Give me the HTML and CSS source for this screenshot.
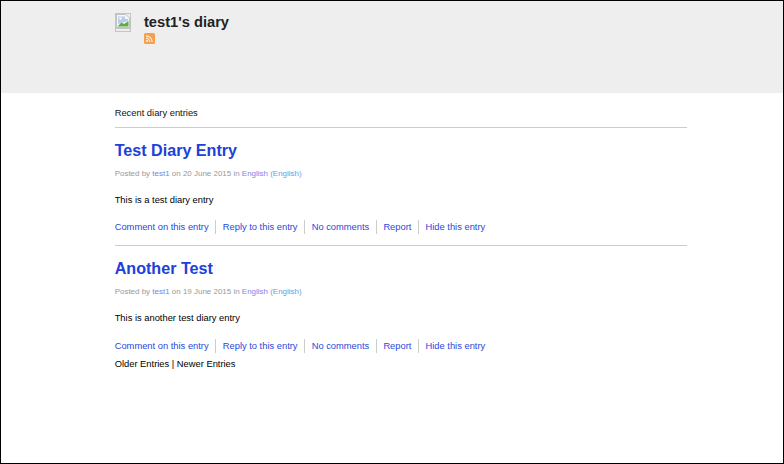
FILE: index.html
```html
<!DOCTYPE html>
<html lang="en">
<head>
<meta charset="utf-8">
<title>test1's diary</title>
<link rel="stylesheet" href="styles.css">
</head>
<body>
<div class="frame">
  <header class="header">
    <div class="wrap header-inner">
      <div class="avatar">
        <svg width="16" height="19" viewBox="0 0 16 19" aria-hidden="true">
          <rect x="0.5" y="0.5" width="15" height="18" fill="#eeeeee" stroke="#c4c4c4"/>
          <line x1="1" y1="15.5" x2="15" y2="15.5" stroke="#c4c4c4"/>
          <path d="M1.5 1.5H11L14.5 5V14.5H1.5Z" fill="#f4f6f8" stroke="#b4b4b4" stroke-width="0.8"/>
          <path d="M3 3.5H10V6H13V8L3 11Z" fill="#b8cdea"/>
          <path d="M2.5 13.5L6.5 9.5L9 11L13.5 8V13.5Z" fill="#5fae3c"/>
          <circle cx="5.5" cy="5.5" r="1.2" fill="#ffffff"/>
        </svg>
      </div>
      <div class="head-text">
        <h1 class="diary-title">test1's diary</h1>
        <a class="rss" href="#" aria-label="RSS">
          <svg width="11" height="11" viewBox="0 0 11 11" aria-hidden="true">
            <rect width="11" height="11" rx="1.5" fill="#f5a04a"/>
            <circle cx="3" cy="8" r="1.1" fill="#fff" fill-opacity="0.85"/>
            <path d="M2 5.2A3.8 3.8 0 0 1 5.8 9M2 2.8A6.2 6.2 0 0 1 8.2 9" fill="none" stroke="#fff" stroke-opacity="0.8" stroke-width="1.2"/>
          </svg>
        </a>
      </div>
    </div>
  </header>
  <main class="wrap content">
    <p class="intro">Recent diary entries</p>
    <article class="entry">
      <h2 class="entry-title"><a href="#">Test Diary Entry</a></h2>
      <p class="meta">Posted by <a href="#">test1</a> on 20 June 2015 in <a class="cat" href="#">English</a> <a class="lang" href="#">(English)</a></p>
      <p class="body-text">This is a test diary entry</p>
      <ul class="actions">
        <li><a href="#">Comment on this entry</a></li>
        <li><a href="#">Reply to this entry</a></li>
        <li><a href="#">No comments</a></li>
        <li><a href="#">Report</a></li>
        <li><a href="#">Hide this entry</a></li>
      </ul>
    </article>
    <article class="entry">
      <h2 class="entry-title"><a href="#">Another Test</a></h2>
      <p class="meta">Posted by <a href="#">test1</a> on 19 June 2015 in <a class="cat" href="#">English</a> <a class="lang" href="#">(English)</a></p>
      <p class="body-text">This is another test diary entry</p>
      <ul class="actions">
        <li><a href="#">Comment on this entry</a></li>
        <li><a href="#">Reply to this entry</a></li>
        <li><a href="#">No comments</a></li>
        <li><a href="#">Report</a></li>
        <li><a href="#">Hide this entry</a></li>
      </ul>
    </article>
    <p class="pager">Older Entries | Newer Entries</p>
  </main>
</div>
</body>
</html>
```

FILE: styles.css
```css
* { box-sizing: border-box; }
html, body { margin: 0; padding: 0; height: 100%; background: #fff; }
body { font-family: "Liberation Sans", Arial, sans-serif; font-size: 9.36px; color: #111; }
a { text-decoration: none; }
.frame { height: 464px; border: 1px solid #000; overflow: hidden; }
.wrap { width: 572.4px; margin-left: 113.67px; }
.header { height: 92px; background: #eee; }
.header-inner { display: flex; padding-top: 12px; }
.avatar { width: 16px; height: 19px; margin-left: 0.33px; margin-right: 13px; }
.avatar svg { display: block; }
.diary-title { margin: 0; font-size: 14.68px; line-height: 19px; font-weight: bold; color: #222; }
.rss { display: block; margin-top: 1px; height: 11px; }
.rss svg { display: block; }
.content { padding-top: 14px; }
.intro { margin: 0; height: 21px; line-height: 13px; border-bottom: 1px solid #ccc; }
.entry-title { margin: 0; font-size: 16.12px; line-height: 21px; font-weight: bold; padding-top: 12px; }
.entry-title a { color: #2040d8; }
.meta { margin: 0; padding-top: 7px; font-size: 7.98px; line-height: 11px; color: #999; }
.meta a { color: #7088e8; }
.meta .cat { color: #7f84ec; }
.meta .lang { color: #6a9be8; }
.body-text { margin: 0; padding-top: 15px; line-height: 13px; color: #000; }
.actions { list-style: none; margin: 0; padding: 13.2px 0 0; display: flex; }
.actions li { line-height: 14px; padding: 0 6.55px; border-left: 1px solid #ccc; }
.actions li:first-child { padding-left: 0; border-left: 0; }
.actions a { color: #2a48dc; }
.entry:first-of-type .actions { padding-bottom: 11.2px; border-bottom: 1px solid #ccc; }
.pager { margin: 5px 0 0; line-height: 13px; color: #000; }
```
